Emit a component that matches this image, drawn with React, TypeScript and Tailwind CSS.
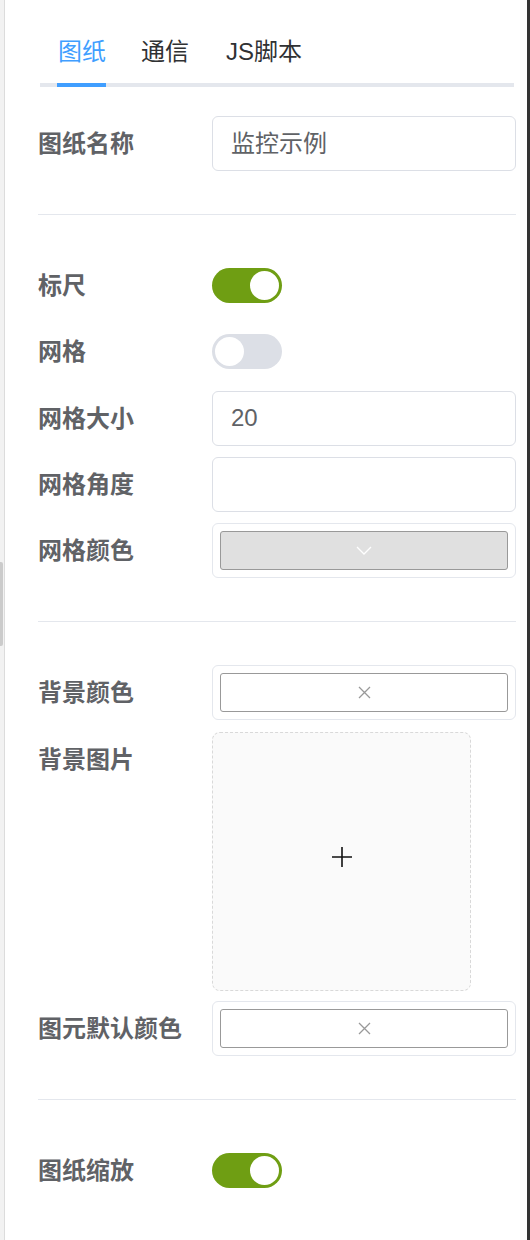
import React from "react";

const font = { fontFamily: '"Liberation Sans", "Noto Sans CJK SC", sans-serif' };

function Label({ children }: { children: React.ReactNode }) {
  return (
    <div className="w-[174px] shrink-0 text-[24px] font-bold leading-[55px] text-[#606266]">
      {children}
    </div>
  );
}

function Row({ label, children, className = "" }: { label: string; children: React.ReactNode; className?: string }) {
  return (
    <div className={`flex items-start ${className}`}>
      <Label>{label}</Label>
      <div className="flex min-h-[55px] flex-1 items-center">{children}</div>
    </div>
  );
}

function Switch({ on }: { on: boolean }) {
  return (
    <div
      className={`flex h-[35px] w-[70px] items-center rounded-full px-[3px] ${
        on ? "justify-end bg-[#6f9e13]" : "justify-start bg-[#dcdfe6]"
      }`}
    >
      <div className="h-[29px] w-[29px] rounded-full bg-white" />
    </div>
  );
}

function TextInput({ value }: { value?: string }) {
  return (
    <div className="flex h-[55px] w-full items-center rounded-[6px] border border-[#dcdfe6] bg-white px-[18px] text-[24px] text-[#606266]">
      {value}
    </div>
  );
}

function ColorPicker({ filled }: { filled?: boolean }) {
  return (
    <div className="h-[55px] w-full rounded-[6px] border border-[#e4e7ed] bg-white p-[7px]">
      <div
        className={`flex h-full w-full items-center justify-center rounded-[3px] border border-[#999] ${
          filled ? "bg-[#e0e0e0]" : "bg-white"
        }`}
      >
        {filled ? (
          <svg width="16" height="9" viewBox="0 0 16 9" fill="none">
            <path d="M1 1 L8 8 L15 1" stroke="#ffffff" strokeWidth="1.3" />
          </svg>
        ) : (
          <svg width="13" height="13" viewBox="0 0 13 13" fill="none">
            <path d="M1 1 L12 12 M12 1 L1 12" stroke="#999" strokeWidth="1.3" />
          </svg>
        )}
      </div>
    </div>
  );
}

function Divider({ className = "" }: { className?: string }) {
  return <div className={`h-px bg-[#e4e7ed] ${className}`} />;
}

export default function App() {
  return (
    <div className="flex h-[1240px] w-[530px] bg-white" style={font}>
      <div className="relative w-[5px] shrink-0 border-r border-[#dcdcdc] bg-[#f2f2f2]">
        <div className="absolute left-0 top-[562px] h-[84px] w-[3px] rounded-r-[2px] bg-[#cbcbcb]" />
      </div>

      <div className="flex-1 pl-[33px] pr-[11px]">
        <div className="relative ml-[2px] mr-[2px] mt-[34px]">
          <div className="flex pl-[18px] text-[24px] leading-[36px] text-[#303133]">
            <div className="text-[#409eff]">图纸</div>
            <div className="ml-[35px]">通信</div>
            <div className="ml-[37px]">JS脚本</div>
          </div>
          <div className="relative mt-[13px] h-[4px] bg-[#e4e7ed]">
            <div className="absolute left-[17px] top-0 h-[4px] w-[49px] bg-[#409eff]" />
          </div>
        </div>

        <Row label="图纸名称" className="mt-[29px]">
          <TextInput value="监控示例" />
        </Row>

        <Divider className="mt-[43px]" />

        <div className="mt-[43px] flex flex-col gap-[11.25px]">
          <Row label="标尺">
            <Switch on />
          </Row>
          <Row label="网格">
            <Switch on={false} />
          </Row>
          <Row label="网格大小">
            <TextInput value="20" />
          </Row>
          <Row label="网格角度">
            <TextInput />
          </Row>
          <Row label="网格颜色">
            <ColorPicker filled />
          </Row>
        </div>

        <Divider className="mt-[43px]" />

        <div className="mt-[43px] flex flex-col">
          <Row label="背景颜色">
            <ColorPicker />
          </Row>
          <Row label="背景图片" className="mt-[12px]">
            <div className="flex h-[259px] w-[259px] items-center justify-center rounded-[8px] border border-dashed border-[#d9d9d9] bg-[#fafafa]">
              <svg className="mb-[9px]" width="22" height="22" viewBox="0 0 22 22" fill="none">
                <path d="M11 1 V21 M1 11 H21" stroke="#111" strokeWidth="1.6" />
              </svg>
            </div>
          </Row>
          <Row label="图元默认颜色" className="mt-[10px]">
            <ColorPicker />
          </Row>
        </div>

        <Divider className="mt-[43px]" />

        <Row label="图纸缩放" className="mt-[43px]">
          <Switch on />
        </Row>
      </div>

      <div className="w-[3px] shrink-0 bg-[#333]" />
    </div>
  );
}
